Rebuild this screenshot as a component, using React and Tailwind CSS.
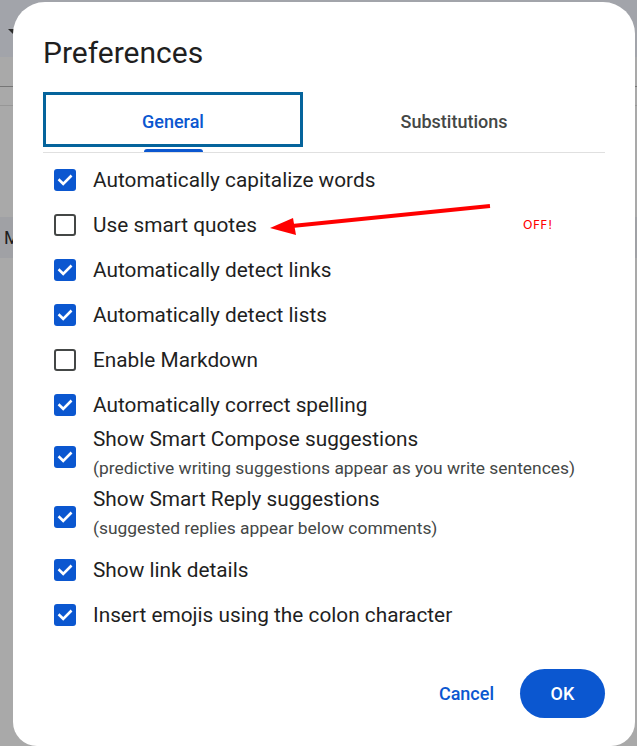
import React, { useState } from 'react';

const options = [
    { id: 'capitalize', label: 'Automatically capitalize words', checked: true },
    { id: 'quotes', label: 'Use smart quotes', checked: false },
    { id: 'links', label: 'Automatically detect links', checked: true },
    { id: 'lists', label: 'Automatically detect lists', checked: true },
    { id: 'markdown', label: 'Enable Markdown', checked: false },
    { id: 'spelling', label: 'Automatically correct spelling', checked: true },
    { id: 'compose', label: 'Show Smart Compose suggestions', hint: '(predictive writing suggestions appear as you write sentences)', checked: true },
    { id: 'reply', label: 'Show Smart Reply suggestions', hint: '(suggested replies appear below comments)', checked: true },
    { id: 'linkDetails', label: 'Show link details', checked: true },
    { id: 'emoji', label: 'Insert emojis using the colon character', checked: true },
];

const Checkbox = ({ checked, onChange }) => (
    <button
        type="button"
        onClick={onChange}
        className={checked
            ? 'w-[22px] h-[22px] rounded-[3px] bg-[#0b57d0] flex items-center justify-center shrink-0'
            : 'w-[22px] h-[22px] rounded-[3px] border-2 border-[#444746] bg-white shrink-0'}
    >
        {checked && (
            <svg width="22" height="22" viewBox="0 0 22 22" fill="none">
                <path d="M5.5 11.2 L9.2 14.8 L16.6 7.4" stroke="white" strokeWidth="2.6" strokeLinecap="square" />
            </svg>
        )}
    </button>
);

const App = () => {
    const [values, setValues] = useState(() => Object.fromEntries(options.map((o) => [o.id, o.checked])));
    const [tab, setTab] = useState('general');

    const toggle = (id) => setValues((v) => ({ ...v, [id]: !v[id] }));

    return (
        <div className="relative w-[637px] h-[746px] overflow-hidden bg-[#a9a9a9] font-['Roboto',sans-serif]">
            {/* page behind the dialog */}
            <div className="flex flex-col">
                <div className="h-[57px] bg-[#a2a4aa] flex items-start pt-[29px] pl-[8px]">
                    <div className="w-0 h-0 border-l-[5px] border-r-[5px] border-t-[5px] border-l-transparent border-r-transparent border-t-[#2b2b2b]" />
                </div>
                <div className="h-[30px] border-b border-[#767676]" />
                <div className="h-[19px] border-b border-[#979797]" />
                <div className="h-[111px]" />
                <div className="h-[41px] bg-[#a0a1a5] flex items-center pl-[4px] text-[18px] text-[#1f1f1f]">M</div>
            </div>

            {/* dialog */}
            <div className="absolute left-[13px] top-[2px] w-[622px] h-[744px] bg-white rounded-t-[32px] rounded-b-[24px] px-[30px] pt-[33px]">
                <h1 className="text-[30px] leading-[36px] text-[#1f1f1f]">Preferences</h1>

                <div className="mt-[21px] flex border-b border-[#e0e0e0]">
                    <div className="w-[260px] flex flex-col">
                        <button
                            type="button"
                            onClick={() => setTab('general')}
                            className="h-[55px] pt-[3px] border-[3px] border-[#05649c] text-[18px] font-medium text-[#0b57d0] flex items-center justify-center"
                        >
                            General
                        </button>
                        <div className={tab === 'general' ? 'mt-[2px] mx-auto w-[59px] h-[3px] rounded-t-[3px] bg-[#0b57d0]' : 'mt-[2px] h-[3px]'} />
                    </div>
                    <button
                        type="button"
                        onClick={() => setTab('substitutions')}
                        className="flex-1 h-[55px] pt-[3px] text-[18px] font-medium text-[#444746] flex items-center justify-center"
                    >
                        Substitutions
                    </button>
                </div>

                <div className="mt-[4px] pl-[11px] flex flex-col">
                    {options.map((o) => (
                        o.hint ? (
                            <div key={o.id} className="flex h-[60px] gap-[17px]">
                                <div className="self-center"><Checkbox checked={values[o.id]} onChange={() => toggle(o.id)} /></div>
                                <div className="flex flex-col">
                                    <span className="text-[20.8px] leading-[24px] text-[#1f1f1f]">{o.label}</span>
                                    <span className="mt-[5px] text-[17.4px] leading-[24px] text-[#444746]">{o.hint}</span>
                                </div>
                            </div>
                        ) : (
                            <div key={o.id} className="flex items-center h-[45px] gap-[17px]">
                                <Checkbox checked={values[o.id]} onChange={() => toggle(o.id)} />
                                <span className="text-[20.8px] leading-[24px] text-[#1f1f1f]">{o.label}</span>
                            </div>
                        )
                    ))}
                </div>

                <div className="mt-[32px] flex items-center justify-end gap-[26px]">
                    <button type="button" className="text-[18px] font-medium text-[#0b57d0]">Cancel</button>
                    <button type="button" className="w-[85px] h-[49px] rounded-full bg-[#0b57d0] text-[18px] font-medium text-white">OK</button>
                </div>
            </div>

            {/* annotation */}
            <svg className="absolute left-0 top-0" width="637" height="746" viewBox="0 0 637 746">
                <line x1="490" y1="206" x2="292" y2="226" stroke="#ff0000" strokeWidth="4" />
                <polygon points="270,228 293,218 296,235" fill="#ff0000" />
            </svg>
            <span className="absolute left-[523px] top-[218px] text-[12px] leading-[14px] tracking-[0.5px] text-[#ff0000] font-['DejaVu_Sans',sans-serif]">OFF!</span>
        </div>
    );
};

export default App;
